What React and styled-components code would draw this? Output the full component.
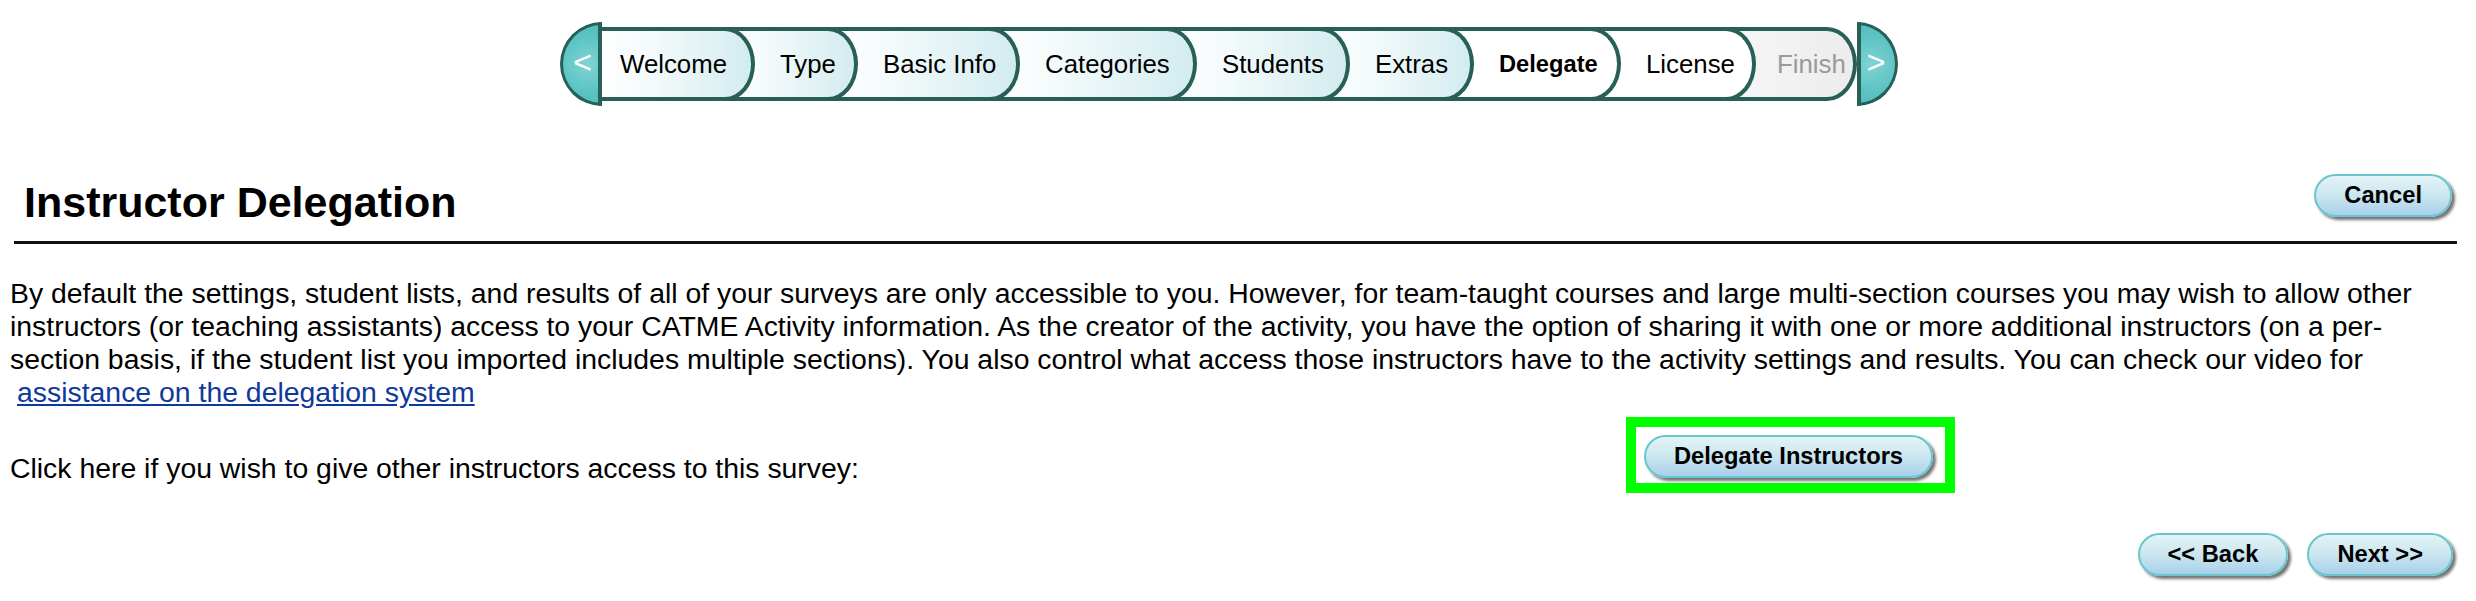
import React from "react"
import styled, { createGlobalStyle } from "styled-components"

const OVER = 32

const steps = [
  { label: "Welcome", w: 153, state: "done" },
  { label: "Type", w: 103, state: "done" },
  { label: "Basic Info", w: 162, state: "done" },
  { label: "Categories", w: 177, state: "done" },
  { label: "Students", w: 153, state: "done" },
  { label: "Extras", w: 124, state: "done" },
  { label: "Delegate", w: 147, state: "current" },
  { label: "License", w: 135, state: "todo" },
  { label: "Finish", w: 101, state: "disabled", pad: 21 },
]

const App = () => {
  return (
    <Page>
      <GlobalStyle />
      <StepperWrap>
        <Cap $side="left">&lt;</Cap>
        <Tabs>
          {steps.map((s, i) => (
            <Tab
              key={s.label}
              $i={i}
              $w={s.w}
              $pad={s.pad ?? 25}
              $state={s.state}
              $z={steps.length - i}
            >
              {s.label}
            </Tab>
          ))}
        </Tabs>
        <Cap $side="right">&gt;</Cap>
      </StepperWrap>

      <Header>
        <Title>Instructor Delegation</Title>
        <CancelButton>Cancel</CancelButton>
      </Header>
      <Rule />

      <Intro>
        By default the settings, student lists, and results of all of your surveys are only accessible to you.
        However, for team-taught courses and large multi-section courses you may wish to allow other instructors
        (or teaching assistants) access to your CATME Activity information. As the creator of the activity, you
        have the option of sharing it with one or more additional instructors (on a per-section basis, if the
        student list you imported includes multiple sections). You also control what access those instructors
        have to the activity settings and results. You can check our video for{" "}
        <HelpLink href="#">assistance on the delegation system</HelpLink>
      </Intro>

      <DelegateRow>
        <RowText>Click here if you wish to give other instructors access to this survey:</RowText>
        <Highlight>
          <Button>Delegate Instructors</Button>
        </Highlight>
      </DelegateRow>

      <Nav>
        <Button>&lt;&lt; Back</Button>
        <Button>Next &gt;&gt;</Button>
      </Nav>
    </Page>
  )
}

export default App

const GlobalStyle = createGlobalStyle`
  body {
    margin: 0;
    background: #ffffff;
    font-family: "Liberation Sans", Arial, sans-serif;
    color: #000;
  }
`

const Page = styled.main`
  box-sizing: border-box;
  width: 2476px;
  height: 601px;
  padding: 22px 10px 0;
  overflow: hidden;
`

const StepperWrap = styled.nav`
  display: flex;
  align-items: center;
  justify-content: center;
  padding-right: 18px;
`

const Cap = styled.div`
  box-sizing: border-box;
  width: ${p => (p.$side === "left" ? 42 : 41)}px;
  height: 84px;
  display: flex;
  align-items: center;
  justify-content: center;
  background: radial-gradient(circle at ${p => (p.$side === "left" ? "70%" : "30%")} 50%, #80d4d4 0%, #5cc3c3 60%, #52bbbb 100%);
  border: 3px solid #285f56;
  ${p => (p.$side === "left" ? "border-right-width: 4px;" : "border-left-width: 4px;")}
  border-radius: ${p => (p.$side === "left" ? "100% 0 0 100% / 50% 0 0 50%" : "0 100% 100% 0 / 0 50% 50% 0")};
  color: #ffffff;
  font-size: 32px;
  line-height: 1;
  padding: ${p => (p.$side === "left" ? "0 0 4px 4px" : "0 4px 4px 0")};
  position: relative;
  z-index: 20;
`

const Tabs = styled.ol`
  display: flex;
  margin: 0;
  padding: 0;
  list-style: none;
`

const tabBackground = {
  done: "linear-gradient(90deg, #ffffff 0%, #f3fafb 35%, #d3ecef 100%)",
  current: "#ffffff",
  todo: "#ffffff",
  disabled: "linear-gradient(90deg, #f7f7f7 0%, #ececec 100%)",
}

const Tab = styled.li`
  position: relative;
  z-index: ${p => p.$z};
  box-sizing: border-box;
  width: ${p => p.$w + (p.$i === 0 ? 0 : OVER)}px;
  height: 74px;
  margin-left: ${p => (p.$i === 0 ? 0 : -OVER)}px;
  padding-left: ${p => (p.$i === 0 ? 18 : OVER + p.$pad)}px;
  display: flex;
  align-items: center;
  white-space: nowrap;
  overflow: hidden;
  border: 4px solid #285f56;
  border-left: 0;
  border-radius: 0 30px 30px 0 / 0 50% 50% 0;
  background: ${p => tabBackground[p.$state]};
  font-size: ${p => (p.$state === "current" ? "23.7px" : "25.8px")};
  font-weight: ${p => (p.$state === "current" ? "bold" : "normal")};
  color: ${p => (p.$state === "disabled" ? "#9a9a9a" : "#000")};
`

const Header = styled.div`
  display: flex;
  justify-content: space-between;
  align-items: flex-start;
  margin-top: 65px;
  padding-right: 14px;
`

const Title = styled.h1`
  margin: 7px 0 0 14px;
  font-size: 43px;
  line-height: 48px;
  font-weight: bold;
`

const Button = styled.button`
  box-sizing: border-box;
  height: 43px;
  padding: 0 28px;
  border: 2px solid #6ac6cb;
  border-radius: 22px;
  background: linear-gradient(180deg, #e3f4f6 0%, #cbe6ef 50%, #a8d0ec 100%);
  box-shadow: 3px 3px 3px rgba(0, 0, 0, 0.55);
  font-family: "Liberation Sans", Arial, sans-serif;
  font-size: 23.7px;
  font-weight: bold;
  color: #000;
  white-space: nowrap;
  cursor: pointer;
`

const CancelButton = styled(Button)`
  margin-top: 3px;
`

const Rule = styled.div`
  height: 3px;
  margin: 15px 9px 0 4px;
  background: #111;
`

const Intro = styled.p`
  margin: 33px 0 0;
  font-size: 28.4px;
  line-height: 33px;
`

const HelpLink = styled.a`
  margin-left: 7px;
  color: #0f3a9c;
  text-decoration: underline;
`

const DelegateRow = styled.div`
  display: grid;
  grid-template-columns: 1616px auto;
  margin-top: 8px;
`

const RowText = styled.div`
  align-self: end;
  padding-bottom: 8px;
  font-size: 28.4px;
  line-height: 33px;
`

const Highlight = styled.div`
  justify-self: start;
  display: flex;
  border: 10px solid #00ff00;
  padding: 8px 12px 5px 8px;
`

const Nav = styled.div`
  display: flex;
  justify-content: flex-end;
  gap: 19px;
  margin-top: 40px;
  padding-right: 13px;
`
